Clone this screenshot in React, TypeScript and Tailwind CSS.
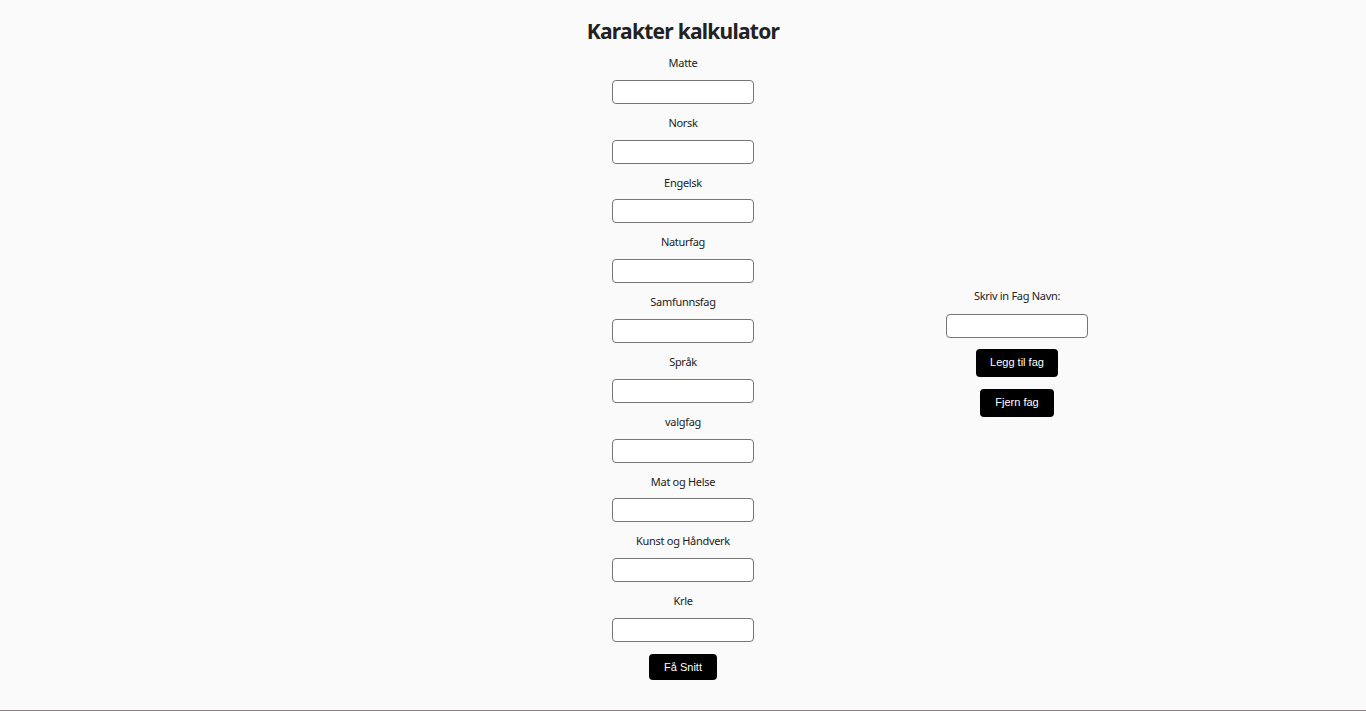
import { useState } from "react"

const defaultSubjects = [
  "Matte",
  "Norsk",
  "Engelsk",
  "Naturfag",
  "Samfunnsfag",
  "Språk",
  "valgfag",
  "Mat og Helse",
  "Kunst og Håndverk",
  "Krle",
]

const labelFont = { fontFamily: '"Noto Sans", "Open Sans", sans-serif' }
const btnFont = { fontFamily: '"Liberation Sans", Arial, sans-serif' }

export default function App() {
  const [subjects, setSubjects] = useState(defaultSubjects)
  const [newName, setNewName] = useState("")

  return (
    <div className="flex min-h-[711px] flex-col bg-[#fafafa] text-[#222]" style={labelFont}>
      <div className="grid flex-1 grid-cols-[minmax(0,1fr)_142px_minmax(0,1fr)]">
        <div />
        <div className="flex flex-col items-center pt-[15px]">
          <h1 className="whitespace-nowrap text-[21px] font-bold leading-[32px] tracking-[-0.75px] text-[#222]">
            Karakter kalkulator
          </h1>
          <div className="mt-[9px] flex flex-col items-center">
            {subjects.map((s) => (
              <div key={s} className="mb-[12px] flex flex-col items-center">
                <label className="whitespace-nowrap text-[11px] leading-[14.8px] tracking-[-0.3px] text-[#222]">{s}</label>
                <input className="mt-[9px] h-[24px] w-[142px] rounded-[4px] border border-[#767676] bg-white" />
              </div>
            ))}
            <button className="h-[26px] rounded-[4px] bg-black px-[15px] text-[11px] text-white" style={btnFont}>
              Få Snitt
            </button>
          </div>
        </div>
        <div className="flex items-center">
          <div className="mb-[6px] ml-[192px] flex w-[142px] flex-col items-center">
            <label className="whitespace-nowrap text-[11px] leading-[15px] tracking-[-0.3px] text-[#222]">
              Skriv in Fag Navn:
            </label>
            <input
              value={newName}
              onChange={(e) => setNewName(e.target.value)}
              className="mt-[11px] h-[24px] w-[142px] rounded-[4px] border border-[#767676] bg-white"
            />
            <button
              onClick={() => newName && setSubjects([...subjects, newName])}
              className="mt-[11px] h-[28px] rounded-[4px] bg-black px-[14px] text-[11px] text-white"
              style={btnFont}
            >
              Legg til fag
            </button>
            <button
              onClick={() => setSubjects(subjects.slice(0, -1))}
              className="mt-[12px] h-[28px] rounded-[4px] bg-black px-[15px] text-[11px] text-white"
              style={btnFont}
            >
              Fjern fag
            </button>
          </div>
        </div>
      </div>
      <div className="h-px bg-[#8a8282]" />
    </div>
  )
}
